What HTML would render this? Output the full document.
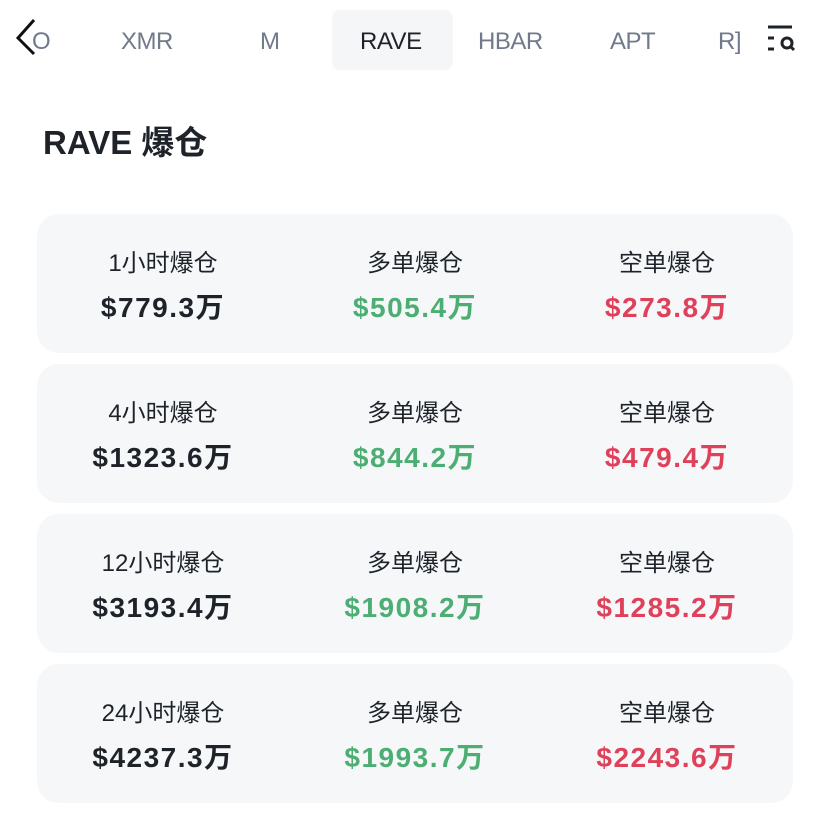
<!DOCTYPE html>
<html><head><meta charset="utf-8"><style>
html,body{margin:0;padding:0;background:#fff;width:829px;height:819px;overflow:hidden;font-family:"Liberation Sans","Noto Sans CJK SC",sans-serif;}
.tab{position:absolute;top:26px;font-size:24px;color:#707a8a;line-height:32px;letter-spacing:-0.5px;}
.card{position:absolute;left:37px;width:756px;height:139px;background:#f6f7f9;border-radius:22px;}
.col{position:absolute;width:252px;text-align:center;}
.lab{position:absolute;top:34px;width:100%;font-size:24px;color:#1e2329;line-height:32px;}
.val{position:absolute;top:76px;width:100%;font-size:28px;font-weight:bold;color:#1e2329;line-height:36px;letter-spacing:1.5px;}
.g{color:#4cae72}.r{color:#e0415a}
</style></head><body>
<svg style="position:absolute;left:12px;top:16px" width="30" height="40"><path d="M22 4 L6 22 L22 38" fill="none" stroke="#111" stroke-width="3"/></svg>
<div class="tab" style="left:32px">O</div>
<div class="tab" style="left:121px">XMR</div>
<div class="tab" style="left:260px">M</div>
<div style="position:absolute;left:332px;top:10px;width:121px;height:60px;background:#f5f6f8;border-radius:8px"></div>
<div class="tab" style="left:360px;color:#1e2329">RAVE</div>
<div class="tab" style="left:478px">HBAR</div>
<div class="tab" style="left:610px">APT</div>
<div class="tab" style="left:718px">R]</div>
<svg style="position:absolute;left:766px;top:24px" width="36" height="30"><path d="M2 3H26M2 14H8M2 25H8" stroke="#1e2329" stroke-width="3"/><circle cx="21" cy="19" r="5" fill="none" stroke="#1e2329" stroke-width="3"/><path d="M24 22L28 26" stroke="#1e2329" stroke-width="3"/></svg>
<div style="position:absolute;left:43px;top:121px;font-size:33px;font-weight:bold;color:#1e2329;line-height:44px">RAVE 爆仓</div>

<div class="card" style="top:214px">
<div class="col" style="left:0"><div class="lab">1小时爆仓</div><div class="val">$779.3万</div></div>
<div class="col" style="left:252px"><div class="lab">多单爆仓</div><div class="val g">$505.4万</div></div>
<div class="col" style="left:504px"><div class="lab">空单爆仓</div><div class="val r">$273.8万</div></div>
</div>
<div class="card" style="top:364px">
<div class="col" style="left:0"><div class="lab">4小时爆仓</div><div class="val">$1323.6万</div></div>
<div class="col" style="left:252px"><div class="lab">多单爆仓</div><div class="val g">$844.2万</div></div>
<div class="col" style="left:504px"><div class="lab">空单爆仓</div><div class="val r">$479.4万</div></div>
</div>
<div class="card" style="top:514px">
<div class="col" style="left:0"><div class="lab">12小时爆仓</div><div class="val">$3193.4万</div></div>
<div class="col" style="left:252px"><div class="lab">多单爆仓</div><div class="val g">$1908.2万</div></div>
<div class="col" style="left:504px"><div class="lab">空单爆仓</div><div class="val r">$1285.2万</div></div>
</div>
<div class="card" style="top:664px">
<div class="col" style="left:0"><div class="lab">24小时爆仓</div><div class="val">$4237.3万</div></div>
<div class="col" style="left:252px"><div class="lab">多单爆仓</div><div class="val g">$1993.7万</div></div>
<div class="col" style="left:504px"><div class="lab">空单爆仓</div><div class="val r">$2243.6万</div></div>
</div>
</body></html>
